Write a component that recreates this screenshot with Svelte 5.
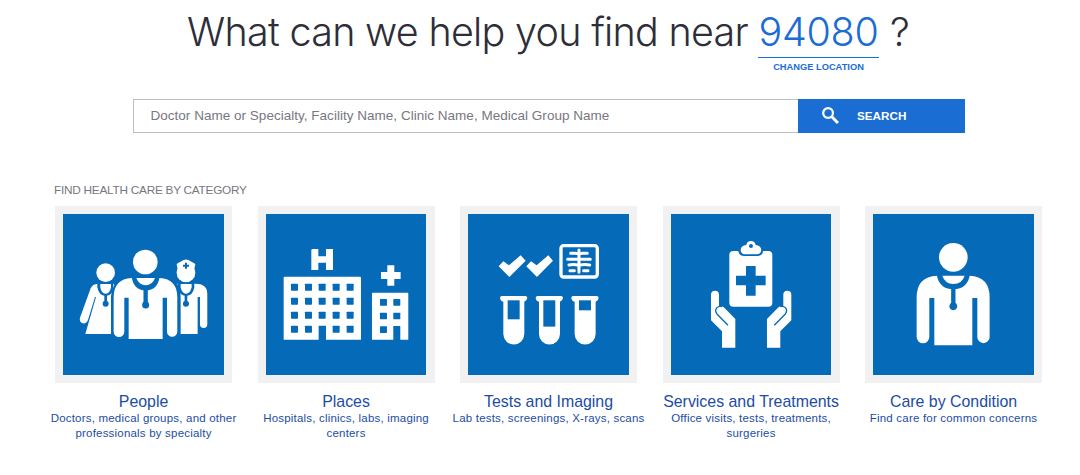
<script lang="ts">
  const zip = '94080';
  let query = '';

  const categories = [
    { id: 'people', title: 'People', text: 'Doctors, medical groups, and other professionals by specialty', view: '40 42 482 482' },
    { id: 'places', title: 'Places', text: 'Hospitals, clinics, labs, imaging centers', view: '42 42 482 482' },
    { id: 'tests', title: 'Tests and Imaging', text: 'Lab tests, screenings, X-rays, scans', view: '42 42 482 482' },
    { id: 'services', title: 'Services and Treatments', text: 'Office visits, tests, treatments, surgeries', view: '43 42 482 482' },
    { id: 'condition', title: 'Care by Condition', text: 'Find care for common concerns', view: '40 42 482 482' }
  ];

  const windowCols = [117, 159, 200, 242, 284];
  const windowRows = [251, 293, 335, 377];
  const tubes = [
    { x: 138, level: 358 },
    { x: 245, level: 380 },
    { x: 352, level: 331 }
  ];
</script>

<main>
  <h1>
    <span class="question">What can we help you find near</span>
    <a class="location" href="#location">
      <span class="zip">{zip}</span>
      <span class="change">CHANGE LOCATION</span>
    </a>
    <span class="mark">?</span>
  </h1>

  <form class="search" on:submit|preventDefault>
    <input
      type="text"
      aria-label="Search"
      placeholder="Doctor Name or Specialty, Facility Name, Clinic Name, Medical Group Name"
      bind:value={query}
    />
    <button type="submit">
      <svg viewBox="0 0 16 16" aria-hidden="true">
        <circle cx="5.7" cy="5.7" r="4.6" />
        <path d="M9 9l6 6" />
      </svg>
      <span>SEARCH</span>
    </button>
  </form>

  <h2>FIND HEALTH CARE BY CATEGORY</h2>

  <div class="categories">
    {#each categories as category}
      <a class="category" href="#{category.id}">
        <span class="tile">
          <svg viewBox={category.view} aria-hidden="true">
            {#if category.id === 'people'}
              <circle cx="168" cy="218" r="28" />
              <path d="M144 251Q129 252 123 265L91 353Q88 366 99 370Q110 372 115 360L136 291H139L107 402H184V290Q184 272 194 256L192 251Z" />
              <path class="cut" d="M143 248V262Q148 288 168 288Q188 288 191 262V248Z" />
              <path d="M152 252H184V262Q181 281 168 281Q155 281 152 262Z" />
              <path class="tube" d="M168 284V306" />
              <circle class="cut" cx="168" cy="311" r="9" />

              <path d="M382 251Q393 268 393 290V402H444V291H451V373A11 11 0 0 0 473 373V281Q473 251 437 251Z" />
              <circle cx="409" cy="219" r="28" />
              <path d="M384 208L381 193Q382 190 387 188L402 180Q409 177 416 180L431 188Q436 190 437 193L434 208Z" />
              <path class="cut" d="M406 188H412V194H418V200H412V206H406V200H400V194H406Z" />
              <path class="cut" d="M384 248V262Q389 288 409 288Q430 288 434 262V248Z" />
              <path d="M393 252H426V262Q422 281 409 281Q397 281 393 262Z" />
              <path class="tube" d="M409 284V306" />
              <circle class="cut" cx="409" cy="311" r="9" />

              <circle cx="287" cy="186" r="37" />
              <path d="M246 234Q192 237 192 292V395A16 16 0 0 0 224 395V293H237V417H339V293H352V395A15.5 15.5 0 0 0 383 395V292Q383 237 330 234Z" />
              <path class="cut" d="M246 230Q252 271 288 271Q324 271 330 230Z" />
              <path d="M260 234H316Q308 256 288 256Q268 256 260 234Z" />
              <path class="tube wide" d="M288 268V310" />
              <circle class="cut" cx="288" cy="315" r="10.5" />
            {:else if category.id === 'places'}
              <path d="M181 147H199V169H222V147H243V210H222V188H199V210H178V149Z" />
              <path d="M98 230H324Q327 230 327 233V419H222V377H200V419H95V233Q95 230 98 230Z" />
              {#each windowRows as y}
                {#each windowCols as x}
                  {#if !(x === 200 && y === 377)}
                    <rect class="cut" {x} {y} width="21" height="21" rx="2" />
                  {/if}
                {/each}
              {/each}
              <path d="M406 196H427V216H446V237H427V257H406V237H387V216H406Z" />
              <path d="M362 278H467L469 280V419H445V378H424V419H360V280Z" />
              {#each [297, 338, 379] as y}
                <rect class="cut" x="384" {y} width="21" height="20" rx="2" />
                {#if y !== 379}
                  <rect class="cut" x="424" {y} width="21" height="20" rx="2" />
                {/if}
              {/each}
            {:else if category.id === 'tests'}
              <path d="M134 199L148 184L165 196L200 166L215 182L166 231Z" />
              <path d="M217 199L231 184L248 196L283 166L297 182L249 231Z" />
              <rect class="frame" x="321" y="137" width="109" height="94" rx="8" />
              <path class="bones" d="M375 150V217M350 160H364Q370 160 375 164Q380 160 386 160H400M341 178H409M345 195Q359 192 375 196Q391 192 407 195M348 212H361M389 212H402" />
              {#each tubes as tube}
                <path d="M{tube.x + 6} 288H{tube.x + 76}Q{tube.x + 82} 288 {tube.x + 82} 294Q{tube.x + 81} 303 {tube.x + 73} 305V402A31.5 31.5 0 0 1 {tube.x + 10} 402V305Q{tube.x + 1} 303 {tube.x} 294Q{tube.x} 288 {tube.x + 6} 288Z" />
                <path class="cut" d="M{tube.x + 23} 301H{tube.x + 59}V{tube.level}H{tube.x + 23}Z" />
              {/each}
            {:else if category.id === 'services'}
              <rect x="218" y="153" width="129" height="167" rx="12" />
              <path class="cut" d="M245 149V153Q247 168 262 168H303Q318 168 320 149Z" />
              <path d="M265 163Q252 162 252 149Q253 137 269 135Q271 123 283 123Q295 123 297 135Q313 137 314 149Q313 162 301 163Z" />
              <circle class="cut" cx="283" cy="138" r="6" />
              <path class="cut" d="M268 198H297V227H327V256H297V287H268V256H238V227H268Z" />
              <path d="M163 284A12 12 0 0 1 187 284V319Q198 316 206 326L236 357V443H196V394L163 361Z" />
              <path class="thumb" d="M214 376L181 342Q173 331 181 323Q187 317 196 320" />
              <path d="M404 284A12 12 0 0 0 380 284V319Q369 316 361 326L331 357V443H371V394L404 361Z" />
              <path class="thumb" d="M353 376L386 342Q394 331 386 323Q380 317 371 320" />
            {:else}
              <circle cx="281" cy="172" r="43" />
              <path d="M232 227Q171 230 171 292V411A19 19 0 0 0 209 411V294H224V436H338V294H353V411A18.5 18.5 0 0 0 390 411V292Q390 230 330 227Z" />
              <path class="cut" d="M231 223Q238 268 281 268Q324 268 331 223Z" />
              <path d="M248 227H315Q307 252 281 252Q256 252 248 227Z" />
              <path class="tube wide" d="M281 264V316" />
              <circle class="cut" cx="281" cy="319" r="11.5" />
            {/if}
          </svg>
        </span>
        <strong>{category.title}</strong>
        <span class="text">{category.text}</span>
      </a>
    {/each}
  </div>
</main>

<style>
  :global(body) {
    margin: 0;
    background: #fff;
  }

  main {
    height: 475px;
    overflow: hidden;
    font-family: "Liberation Sans", Arial, sans-serif;
  }

  a {
    text-decoration: none;
  }

  h1 {
    margin: 0 0 0 187px;
    height: 99px;
    display: flex;
    align-items: flex-start;
    color: #2e2e38;
    font-family: Inter, sans-serif;
    font-size: 39.5px;
    font-weight: 300;
    line-height: 57px;
    white-space: nowrap;
  }

  .question {
    width: 571px;
    padding-top: 4px;
    letter-spacing: -0.72px;
  }

  .location {
    width: 121px;
    display: flex;
    flex-direction: column;
    color: #1b6dd2;
    text-align: center;
  }

  .zip {
    height: 57.5px;
    padding-top: 4px;
    box-sizing: border-box;
    border-bottom: 1px solid #1b6dd2;
    letter-spacing: -0.3px;
  }

  .change {
    font: bold 9.3px/19px "Liberation Sans", Arial, sans-serif;
  }

  .mark {
    padding: 4px 0 0 11px;
  }

  .search {
    width: 832px;
    height: 34px;
    margin-left: 133px;
    display: flex;
  }

  input {
    width: 665px;
    height: 34px;
    padding: 0 16.5px 1px;
    box-sizing: border-box;
    border: 1px solid #bfc1c0;
    border-right: 0;
    border-radius: 0;
    background: #fff;
    font: 13.5px "Liberation Sans", Arial, sans-serif;
    letter-spacing: 0.02px;
    outline: 0;
  }

  input::placeholder {
    color: #777781;
    opacity: 1;
  }

  button {
    flex: 1;
    padding: 0 0 2px 24px;
    border: 0;
    display: flex;
    align-items: center;
    gap: 18px;
    background: #1a6dd2;
    color: #fff;
    font: bold 11.7px "Liberation Sans", Arial, sans-serif;
  }

  button svg {
    width: 17px;
    height: 17px;
    fill: none;
    stroke: #fff;
    stroke-width: 2.1;
  }

  button path {
    stroke-width: 2.8;
  }

  h2 {
    height: 23px;
    margin: 50px 0 0 54px;
    color: #777780;
    font-size: 11.8px;
    font-weight: 400;
    letter-spacing: -0.25px;
    line-height: 15px;
  }

  .categories {
    width: 1012.5px;
    margin-left: 42.3px;
    display: grid;
    grid-template-columns: repeat(5, 1fr);
  }

  .category {
    display: flex;
    flex-direction: column;
    align-items: center;
    color: #1c4ca5;
    text-align: center;
  }

  .tile {
    width: 177px;
    height: 177px;
    box-sizing: border-box;
    padding: 8.2px;
    background: #f1f1f2;
  }

  .tile svg {
    width: 100%;
    height: 100%;
    display: block;
    background: #056ab8;
    fill: #fff;
  }

  .tile .cut {
    fill: #056ab8;
  }

  .tile .tube {
    fill: none;
    stroke: #056ab8;
    stroke-width: 8;
  }

  .tile .tube.wide {
    stroke-width: 13;
  }

  .frame {
    fill: none;
    stroke: #fff;
    stroke-width: 10;
  }

  .bones {
    fill: none;
    stroke: #fff;
    stroke-width: 9;
    stroke-linecap: round;
  }

  .thumb {
    fill: none;
    stroke: #056ab8;
    stroke-width: 4;
  }

  strong {
    margin-top: 9px;
    font-size: 15.9px;
    font-weight: 400;
    line-height: 19px;
  }

  .text {
    max-width: 198px;
    font-size: 11.5px;
    letter-spacing: 0.2px;
    line-height: 15px;
  }
</style>
